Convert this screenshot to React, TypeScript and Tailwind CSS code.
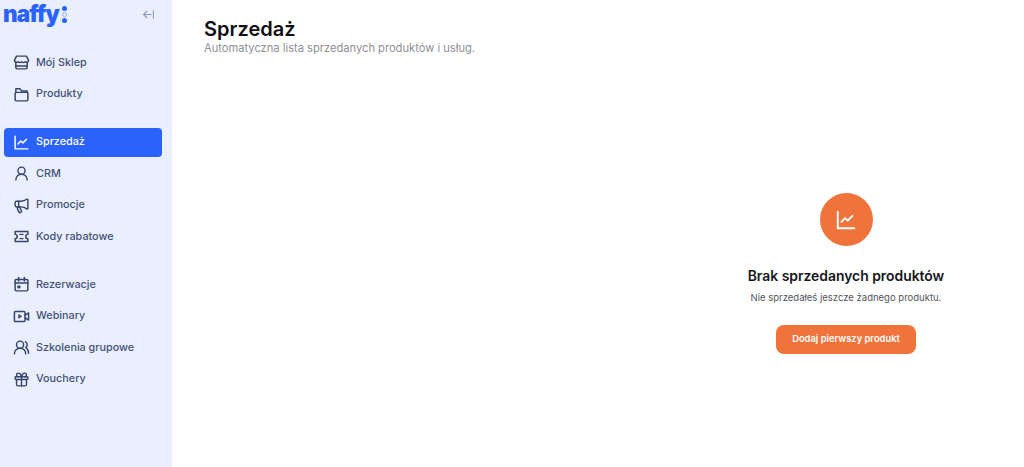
import type { ReactNode } from 'react';
import { ArrowLeftFromLine, Gift, Megaphone, UserRound, UsersRound } from 'lucide-react';

const ICON = 'w-[17px] h-[17px] shrink-0';

function Svg({ children, className = ICON }: { children: ReactNode; className?: string }) {
  return (
    <svg viewBox="0 0 24 24" fill="none" stroke="currentColor" strokeWidth={2.1} strokeLinecap="round" strokeLinejoin="round" className={className}>
      {children}
    </svg>
  );
}

const StoreIcon = () => (
  <Svg>
    <path d="M5 3h14l3 6a3 3 0 0 1-5 2 3.500 3.500 0 0 1-5 0 3.500 3.500 0 0 1-5 0 3 3 0 0 1-5-2z" />
    <path d="M4 12v7a2 2 0 0 0 2 2h12a2 2 0 0 0 2-2v-7" />
    <path d="M4 17h16" />
  </Svg>
);

const FolderIcon = () => (
  <Svg>
    <path d="M4 9V4h6l2 3h8v2" />
    <rect x="3" y="9" width="18" height="12" rx="1.500" />
  </Svg>
);

const TicketIcon = () => (
  <Svg>
    <path d="M3 5h18v4a3 3 0 0 0 0 6v4H3v-4a3 3 0 0 0 0-6z" />
    <path d="M10 9h4M10 15h4" />
  </Svg>
);

const CalendarIcon = () => (
  <Svg>
    <rect x="3" y="5" width="18" height="16" rx="1.500" />
    <path d="M8 2v5M16 2v5M3 10h18" />
    <rect x="7" y="14" width="3" height="3" fill="currentColor" strokeWidth={1} />
  </Svg>
);

const VideoIcon = () => (
  <Svg>
    <rect x="2" y="5" width="15" height="14" rx="1.500" />
    <path d="M17 10l5-3v10l-5-3" />
    <path d="M8 9.500v5l4-2.500z" fill="currentColor" strokeWidth={1} />
  </Svg>
);

const SalesIcon = ({ className }: { className?: string }) => (
  <Svg className={className}>
    <path d="M3 3v18h18" />
    <path d="M7 14l4-4 3 2.500 5-5" />
  </Svg>
);

type Item = { label: string; icon: ReactNode; active?: boolean };

const groups: Item[][] = [
  [
    { label: 'Mój Sklep', icon: <StoreIcon /> },
    { label: 'Produkty', icon: <FolderIcon /> },
  ],
  [
    { label: 'Sprzedaż', icon: <SalesIcon />, active: true },
    { label: 'CRM', icon: <UserRound className={ICON} /> },
    { label: 'Promocje', icon: <Megaphone className={ICON} /> },
    { label: 'Kody rabatowe', icon: <TicketIcon /> },
  ],
  [
    { label: 'Rezerwacje', icon: <CalendarIcon /> },
    { label: 'Webinary', icon: <VideoIcon /> },
    { label: 'Szkolenia grupowe', icon: <UsersRound className={ICON} /> },
    { label: 'Vouchery', icon: <Gift className={ICON} /> },
  ],
];

function NavRow({ item }: { item: Item }) {
  return (
    <a
      className={
        item.active
          ? 'flex h-[28.5px] items-center gap-[6px] rounded-[4px] bg-[#2a62fb] pl-[9px] text-white'
          : 'flex h-[28.5px] items-center gap-[6px] rounded-[4px] pl-[9px] text-[#36436b]'
      }
    >
      {item.icon}
      <span className={item.active ? 'text-[10.8px] font-medium' : 'text-[10.8px] font-medium text-[#46527a]'}>{item.label}</span>
    </a>
  );
}

export default function App() {
  return (
    <div className="flex h-[467px] w-[1024px] overflow-hidden bg-white font-['Inter',sans-serif]">
      <aside className="flex w-[172px] shrink-0 flex-col bg-[#e9effe] pl-[4px] pr-[10px]">
        <div className="flex h-[28px] items-center justify-between pr-[7px]">
          <div className="-ml-[1px] flex items-center text-[#2a62fb]">
            <span className="text-[22.5px] font-black leading-none tracking-[-0.9px]">naffy</span>
            <span className="ml-[3px] flex flex-col items-center gap-[1px]">
              <span className="h-[5px] w-[5px] rounded-full bg-[#2a62fb]" />
              <span className="h-[5px] w-[5px] rounded-full border border-[#8fb0fb]" />
              <span className="h-[5px] w-[5px] rounded-full bg-[#2a62fb]" />
            </span>
          </div>
          <ArrowLeftFromLine className="h-[13px] w-[13px] text-[#8d9ab8]" />
        </div>
        <nav className="mt-[20.5px] flex flex-col gap-[19.5px]">
          {groups.map((group, i) => (
            <div key={i} className="flex flex-col gap-[3px]">
              {group.map((item) => (
                <NavRow key={item.label} item={item} />
              ))}
            </div>
          ))}
        </nav>
      </aside>

      <main className="flex min-w-0 flex-1 flex-col">
        <div className="pl-[32px] pt-[17px]">
          <h1 className="text-[20px] font-semibold leading-[24px] text-[#0e0e14]">Sprzedaż</h1>
          <p className="text-[11.15px] leading-[14px] text-[#8f8f94]">Automatyczna lista sprzedanych produktów i usług.</p>
        </div>
        <div className="mt-[138px] flex justify-end">
          <div className="flex w-[356px] flex-col items-center">
            <div className="flex h-[53px] w-[53px] items-center justify-center rounded-full bg-[#f0733b] text-white">
              <SalesIcon className="h-[22px] w-[22px]" />
            </div>
            <h2 className="mt-[21px] text-[13.9px] font-semibold leading-[18px] text-[#16161c]">Brak sprzedanych produktów</h2>
            <p className="mt-[6px] text-[9.5px] leading-[14px] text-[#55555c]">Nie sprzedałeś jeszcze żadnego produktu.</p>
            <button className="mt-[20px] h-[29px] w-[140px] rounded-[8px] bg-[#f0733b] text-[9.4px] font-semibold text-white">
              Dodaj pierwszy produkt
            </button>
          </div>
        </div>
      </main>
    </div>
  );
}
